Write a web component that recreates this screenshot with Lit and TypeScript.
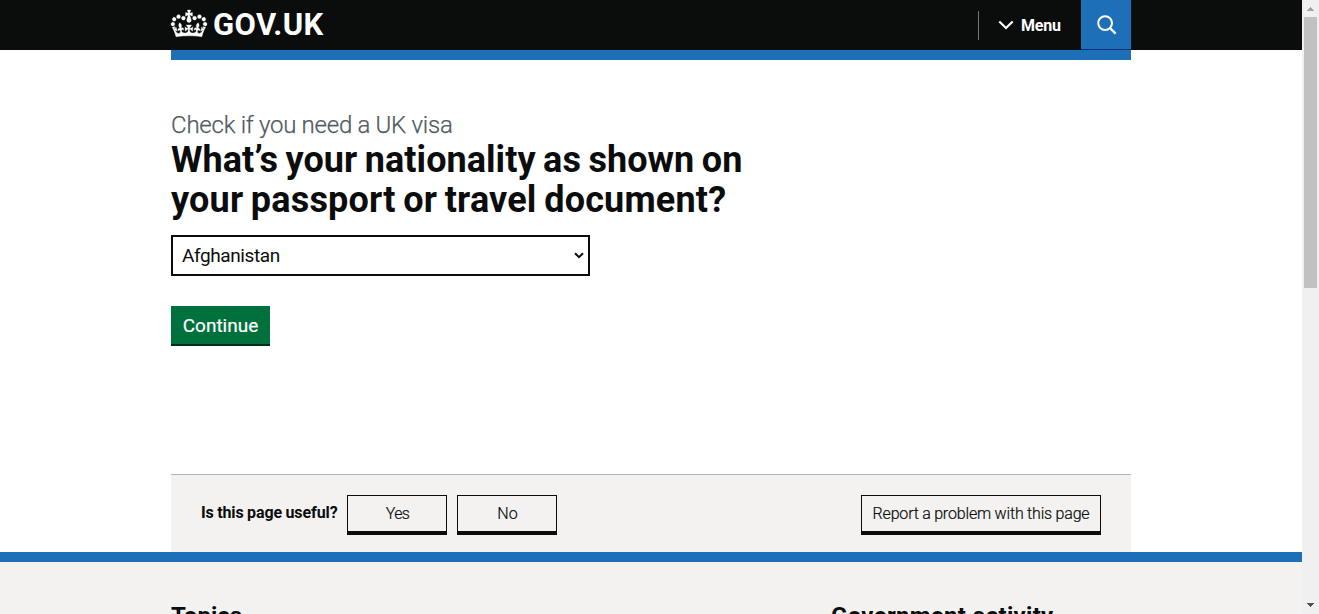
import { LitElement, html, css } from "lit";
import { customElement } from "lit/decorators.js";

@customElement("site-header")
class SiteHeader extends LitElement {
  static styles = css`
    :host { display: block; background: #0b0c0c; height: 50px; color: #fff; }
    .inner { width: 960px; margin-left: 171px; height: 50px; display: flex; align-items: center; }
    .logo { display: flex; align-items: center; flex: 1; }
    .crown { display: block; width: 36px; height: 27px; margin-top: -3px; fill: #fff; stroke: #fff; stroke-width: 1.2; overflow: visible; }
    .name { margin-left: 6px; font: 700 31px/30px Roboto, sans-serif; white-space: nowrap; letter-spacing: 0.4px; margin-top: -1px; }
    .divider { width: 1px; height: 29px; background: #6f777b; margin-top: 1px; }
    .menu { display: flex; align-items: center; width: 102px; height: 50px; }
    .chevron { width: 16px; height: 10px; margin-left: 19px; }
    .label { margin-left: 7px; font: 700 16px/20px Roboto, sans-serif; white-space: nowrap; margin-top: 1px; letter-spacing: -0.2px; }
    .search { box-sizing: border-box; width: 50px; height: 50px; background: #1d70b8; border-bottom: 1px solid #003078; display: flex; }
    .glass { width: 20px; height: 20px; margin: 15px 0 0 16px; }
  `;
  render() {
    return html`<div class="inner">
      <div class="logo">
        <svg class="crown" viewBox="0 0 132 97" preserveAspectRatio="none"><path d="M25 30.2c3.5 1.5 7.7-.2 9.1-3.7 1.5-3.6-.2-7.8-3.9-9.2-3.6-1.4-7.6.3-9.1 3.9-1.4 3.5.3 7.5 3.9 9zM9 39.5c3.6 1.5 7.8-.2 9.2-3.7 1.5-3.6-.2-7.8-3.9-9.1-3.6-1.5-7.6.2-9.1 3.8-1.4 3.5.3 7.5 3.8 9zM4.4 57.2c3.5 1.5 7.7-.2 9.1-3.8 1.5-3.6-.2-7.7-3.9-9.1-3.5-1.5-7.6.3-9.1 3.8-1.4 3.5.3 7.6 3.9 9.1zm38.3-21.4c3.5 1.5 7.7-.2 9.1-3.8 1.5-3.6-.2-7.7-3.9-9.1-3.6-1.5-7.6.3-9.1 3.8-1.3 3.6.4 7.7 3.9 9.1zm64.4-5.6c-3.6 1.5-7.8-.2-9.1-3.7-1.5-3.6.2-7.8 3.8-9.2 3.6-1.4 7.7.3 9.2 3.9 1.3 3.5-.4 7.5-3.9 9zm15.9 9.3c-3.6 1.5-7.7-.2-9.1-3.7-1.5-3.6.2-7.8 3.7-9.1 3.6-1.5 7.7.2 9.2 3.8 1.5 3.5-.3 7.5-3.8 9zm4.7 17.7c-3.6 1.5-7.8-.2-9.2-3.8-1.5-3.6.2-7.7 3.9-9.1 3.6-1.5 7.7.3 9.2 3.8 1.3 3.5-.4 7.6-3.9 9.1zM89.3 35.8c-3.6 1.5-7.8-.2-9.2-3.8-1.4-3.6.2-7.7 3.9-9.1 3.6-1.5 7.7.3 9.2 3.8 1.4 3.6-.3 7.7-3.9 9.1zM69.7 17.7l8.9 4.7V9.3l-8.9 2.8c-.2-.3-.5-.6-.9-.9L72.4 0H59.6l3.5 11.2c-.3.3-.6.5-.9.9l-8.8-2.8v13.1l8.8-4.7c.3.3.6.7.9.9l-5 15.4v.1c-.2.8-.4 1.6-.4 2.4 0 4.1 3.1 7.5 7 8.1h.2c.3 0 .7.1 1 .1.4 0 .7 0 1-.1h.2c4-.6 7.1-4.1 7.1-8.1 0-.8-.1-1.7-.4-2.4V34l-5.1-15.4c.4-.2.7-.6 1-.9zM66 92.8c16.9 0 32.8 1.1 47.1 3.2 4-16.9 8.9-26.7 14-33.5l-9.6-3.4c1 4.9 1.1 7.2 0 10.2-1.5-1.4-3-4.3-4.2-8.7L108.6 76c2.8-2 5-3.2 7.5-3.3-4.4 9.4-10 11.9-13.6 11.2-4.3-.8-6.3-4.6-5.6-7.9 1-4.7 5.7-5.9 8-.5 4.3-8.7-3-11.4-7.6-8.8 7.1-7.2 7.9-13.5 2.1-21.1-8 6.1-8.1 12.3-4.5 20.8-4.7-5.4-12.1-2.5-9.5 6.2 3.4-5.2 7.9-2 7.2 3.1-.6 4.3-6.4 7.8-13.5 7.2-10.3-.9-10.9-8-11.2-13.8 2.5-.5 7.1 1.8 11 7.3L80.2 60c-4.1 4.4-8 5.3-12.3 5.4 1.4-4.4 8-11.6 8-11.6H55.5s6.4 7.2 7.9 11.6c-4.2-.1-8-1-12.3-5.4l1.4 16.4c3.9-5.5 8.5-7.7 10.9-7.3-.3 5.8-.9 12.8-11.1 13.8-7.2.6-12.9-2.9-13.5-7.2-.7-5 3.8-8.3 7.1-3.1 2.7-8.7-4.6-11.6-9.4-6.2 3.7-8.5 3.6-14.7-4.6-20.8-5.8 7.6-5 13.9 2.2 21.1-4.7-2.6-11.9.1-7.7 8.8 2.3-5.5 7.1-4.2 8.1.5.7 3.3-1.3 7.1-5.7 7.9-3.5.7-9-1.8-13.5-11.2 2.5.1 4.7 1.3 7.5 3.3l-4.7-15.4c-1.2 4.4-2.7 7.2-4.3 8.7-1.1-3-.9-5.3 0-10.2l-9.5 3.4c5 6.9 9.9 16.7 14 33.5 14.8-2.1 30.8-3.2 47.7-3.2z"/></svg>
        <span class="name">GOV.UK</span>
      </div>
      <div class="divider"></div>
      <div class="menu">
        <svg class="chevron" viewBox="0 0 16 10"><path d="M1.3 1.6 8 8.1l6.7-6.5" fill="none" stroke="#fff" stroke-width="2.1"/></svg>
        <span class="label">Menu</span>
      </div>
      <div class="search">
        <svg class="glass" viewBox="0 0 20 20" fill="none" stroke="#fff"><circle cx="8.1" cy="8.1" r="6.9" stroke-width="2"/><path d="m13 13 5.6 5.6" stroke-width="2.4"/></svg>
      </div>
    </div>`;
  }
}

@customElement("page-scrollbar")
class PageScrollbar extends LitElement {
  static styles = css`
    :host { width: 17px; height: 614px; background: #f0f0f0; display: flex; flex-direction: column; align-items: center; }
    .arrow { display: block; width: 17px; height: 17px; }
    .track { flex: 1; width: 13px; }
    .thumb { height: 271px; background: #c1c1c1; }
  `;
  render() {
    return html`
      <svg class="arrow" viewBox="0 0 17 17" shape-rendering="crispEdges"><path d="M8 7h1v1h1v1h1v1h1v1H5v-1h1V9h1V8h1z" fill="#a3a3a3"/></svg>
      <div class="track"><div class="thumb"></div></div>
      <svg class="arrow" viewBox="0 0 17 17" shape-rendering="crispEdges"><path d="M5 6h7v1h-1v1h-1v1H9v1H8V9H7V8H6V7H5z" fill="#505050"/></svg>`;
  }
}

@customElement("app-root")
class AppRoot extends LitElement {
  static styles = css`
    :host { display: flex; width: 1319px; height: 614px; overflow: hidden; background: #fff; color: #0b0c0c; font-family: Roboto, sans-serif; }
    .page { width: 1302px; height: 614px; overflow: hidden; }
    .bar { width: 960px; height: 10px; margin-left: 171px; background: #1d70b8; }
    .main { margin-left: 171px; width: 960px; height: 414px; box-sizing: border-box; padding-top: 50px; white-space: nowrap; }
    .caption { display: block; font-size: 24px; line-height: 30px; font-weight: 300; color: #505a5f; letter-spacing: -0.2px; word-spacing: -0.3px; -webkit-text-stroke: 0.25px #505a5f; }
    h1 { margin: 0; font-size: 36px; line-height: 40px; font-weight: 700; }
    .line { display: block; letter-spacing: 0.05px; word-spacing: -1.5px; }
    .second { letter-spacing: 0.18px; }
    .select { box-sizing: border-box; margin-top: 15px; width: 419px; height: 41px; border: 2px solid #0b0c0c; display: flex; align-items: center; justify-content: space-between; padding: 0 4px 0 9px; font-size: 19px; }
    .value { letter-spacing: -0.4px; }
    .arrow { width: 10px; height: 7px; }
    .continue { box-sizing: border-box; margin-top: 30px; width: 99px; height: 40px; background: #00703c; border-bottom: 2px solid #002d18; color: #fff; font-size: 19px; line-height: 39px; text-align: center; -webkit-text-stroke: 0.2px #fff; }
    .feedback { margin-left: 171px; width: 960px; height: 78px; box-sizing: border-box; border-top: 1px solid #b1b4b6; background: #f3f2f1; display: flex; padding: 20px 30px 0; font-size: 16px; white-space: nowrap; }
    .question { width: 146px; line-height: 36px; font-weight: 700; letter-spacing: -0.1px; word-spacing: -0.4px; }
    .btn { box-sizing: border-box; width: 100px; height: 40px; border: 1px solid #0b0c0c; border-bottom-width: 4px; line-height: 36px; text-align: center; margin-right: 10px; padding-left: 1px; font-weight: 300; -webkit-text-stroke: 0.2px #0b0c0c; }
    .yes { letter-spacing: -0.6px; }
    .report { width: 240px; margin: 0 0 0 auto; padding-left: 0; letter-spacing: -0.15px; word-spacing: -0.3px; }
    .footer { height: 52px; border-top: 10px solid #1d70b8; background: #f3f2f1; overflow: hidden; }
    .cols { margin-left: 171px; padding-top: 39px; display: grid; grid-template-columns: 660px 300px; }
    h2 { margin: 0; font-size: 24px; line-height: 30px; font-weight: 700; white-space: nowrap; }
    .gov { letter-spacing: 0.3px; }
  `;
  render() {
    return html`
      <div class="page">
        <site-header></site-header>
        <div class="bar"></div>
        <div class="main">
          <span class="caption">Check if you need a UK visa</span>
          <h1><span class="line">What’s your nationality as shown on</span><span class="line second">your passport or travel document?</span></h1>
          <div class="select"><span class="value">Afghanistan</span>
            <svg class="arrow" viewBox="0 0 10 7"><path d="m1 1.2 4 4 4-4" fill="none" stroke="#0b0c0c" stroke-width="2"/></svg></div>
          <div class="continue"><span>Continue</span></div>
        </div>
        <div class="feedback">
          <span class="question">Is this page useful?</span>
          <div class="btn yes">Yes</div><div class="btn">No</div>
          <div class="btn report">Report a problem with this page</div>
        </div>
        <div class="footer"><div class="cols"><h2>Topics</h2><h2 class="gov">Government activity</h2></div></div>
      </div>
      <page-scrollbar></page-scrollbar>`;
  }
}
